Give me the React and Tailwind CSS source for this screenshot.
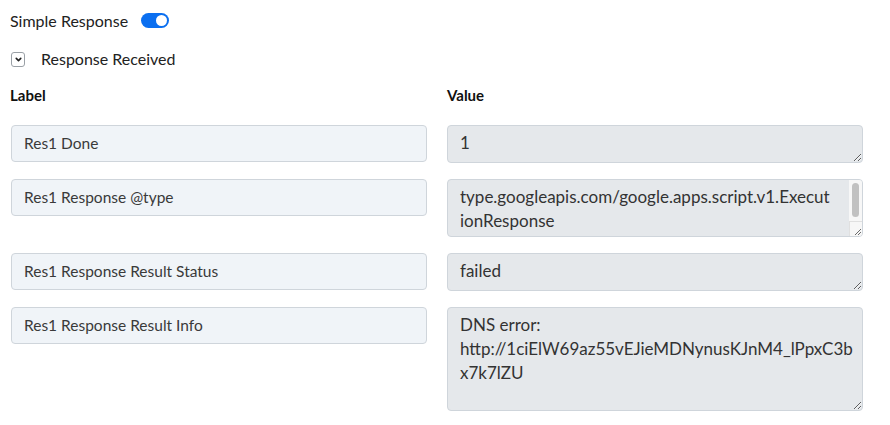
import React, { useState } from 'react'

const rows = [
  { label: 'Res1 Done', value: '1', h: 'h-[38px]' },
  { label: 'Res1 Response @type', value: 'type.googleapis.com/google.apps.script.v1.ExecutionResponse', h: 'h-[58px]', scroll: true },
  { label: 'Res1 Response Result Status', value: 'failed', h: 'h-[38px]' },
  { label: 'Res1 Response Result Info', value: 'DNS error: http://1ciElW69az55vEJieMDNynusKJnM4_lPpxC3bx7k7lZU', h: 'h-[104px]' },
]

function Toggle({ on, onChange }) {
  return (
    <button
      onClick={() => onChange(!on)}
      className={`relative w-[28px] h-[15px] rounded-full ${on ? 'bg-[#0b6ff0]' : 'bg-gray-300'}`}
    >
      <span className={`absolute top-[2px] w-[11px] h-[11px] rounded-full bg-white ${on ? 'left-[15px]' : 'left-[2px]'}`} />
    </button>
  )
}

function ValueBox({ value, h, scroll }) {
  return (
    <div className="relative w-[416px]">
      <textarea
        readOnly
        value={value}
        className={`${h} block w-[416px] rounded-[4px] border border-[#cfd5db] bg-[#e5e8eb] pl-[12px] ${scroll ? 'pr-[30px] overflow-hidden' : 'pr-[6px]'} pt-[5px] pb-[6px] leading-[24px] text-[17px] text-[#333] resize-y outline-none`}
        style={{ fontFamily: 'Lato, "Open Sans", sans-serif' }}
      />
      {scroll && (
        <>
          {/* scrollbar track + thumb */}
          <div className="absolute right-[1px] top-[1px] bottom-[16px] w-[13px] bg-[#f7f7f7] rounded-tr-[3px] pointer-events-none pt-[3px]">
            <div className="mx-auto w-[7px] h-[34px] rounded-full bg-[#c1c1c1]" />
          </div>
          {/* scroll corner with resize grip */}
          <div className="absolute right-[1px] bottom-[1px] w-[13px] h-[15px] bg-[#f7f7f7] border-t border-l border-[#e0e0e0] rounded-br-[3px] pointer-events-none flex items-end justify-end">
            <svg width="9" height="9" viewBox="0 0 9 9" stroke="#6b6b6b" strokeWidth="1">
              <path d="M8 2 2 8M8 5 5 8" />
            </svg>
          </div>
        </>
      )}
    </div>
  )
}

export default function App() {
  const [simple, setSimple] = useState(true)
  const [open, setOpen] = useState(true)

  return (
    <div className="w-[890px] h-[425px] bg-white text-[16px] text-[#222] overflow-hidden" style={{ fontFamily: 'Lato, "Open Sans", sans-serif' }}>
      <div className="flex items-center pl-[10px] pt-[10px] h-[31px]">
        <span className="w-[131px]">Simple Response</span>
        <Toggle on={simple} onChange={setSimple} />
      </div>

      <div className="flex items-center pl-[11px] mt-[20px] h-[16px]">
        <button
          onClick={() => setOpen(!open)}
          className="w-[14px] h-[15px] border border-[#9aa0a6] rounded-[3px] flex items-center justify-center"
        >
          <svg width="9" height="9" viewBox="0 0 10 10" fill="none" stroke="#222" strokeWidth="1.8" strokeLinecap="round" strokeLinejoin="round">
            <path d="M2.5 3.8 5 6.3 7.5 3.8" />
          </svg>
        </button>
        <span className="ml-[16px]">Response Received</span>
      </div>

      {open && (
        <div className="mt-[18px]">
          <div className="grid grid-cols-[416px_416px] gap-x-[20px] pl-[11px] text-[15px]">
            <div className="font-bold text-[#111] -ml-[1px] h-[20px] leading-[20px]">Label</div>
            <div className="font-bold text-[#111] h-[20px] leading-[20px]">Value</div>
          </div>

          <div className="grid grid-cols-[416px_416px] gap-x-[20px] gap-y-[16px] pl-[11px] mt-[20px]">
            {rows.map((r) => (
              <React.Fragment key={r.label}>
                <div className="h-[37px] rounded-[4px] border border-[#cfd5db] bg-[#f0f4f8] px-[12px] pt-[6px] leading-[23px] text-[15.5px] text-[#3a3a3a]">
                  {r.label}
                </div>
                <ValueBox value={r.value} h={r.h} scroll={r.scroll} />
              </React.Fragment>
            ))}
          </div>
        </div>
      )}
    </div>
  )
}
